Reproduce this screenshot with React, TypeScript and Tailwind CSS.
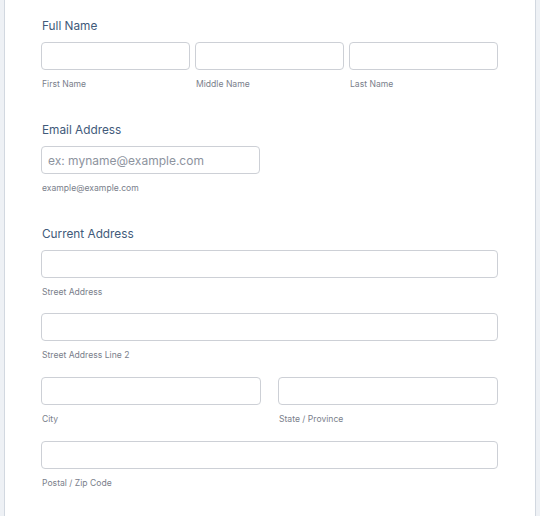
import React from "react";

const font = { fontFamily: "Inter, 'Noto Sans', sans-serif" };

function Field({ label, placeholder, className = "" }: { label?: string; placeholder?: string; className?: string }) {
  return (
    <div className={`flex flex-col ${className}`}>
      <input
        type="text"
        placeholder={placeholder}
        className="h-[28px] w-full rounded-[4px] border border-[#cdd0d6] bg-white px-[6px] text-[12px] text-[#2c3345] outline-none placeholder:text-[#8d939e]"
      />
      {label && <span className="mt-[8px] pl-[1px] text-[8.6px] leading-[12px] text-[#7a808b]">{label}</span>}
    </div>
  );
}

function Heading({ children }: { children: React.ReactNode }) {
  return <h2 className="pl-[1px] text-[11.8px] leading-[16px] font-normal text-[#415a7a]">{children}</h2>;
}

export default function App() {
  return (
    <div className="flex min-h-[516px] w-[540px] bg-[#eef1f5]" style={font}>
      <div className="ml-[4px] w-[532px] border-x border-[#d2d8e0] bg-white pl-[36px] pt-[18px]">
        <div className="w-[457px]">
          <Heading>Full Name</Heading>
          <div className="mt-[8px] grid grid-cols-3 gap-[5px]">
            <Field label="First Name" />
            <Field label="Middle Name" />
            <Field label="Last Name" />
          </div>

          <div className="mt-[32px]">
            <Heading>Email Address</Heading>
            <Field className="mt-[8px] w-[219px]" placeholder="ex: myname@example.com" label="example@example.com" />
          </div>

          <div className="mt-[32px]">
            <Heading>Current Address</Heading>
            <Field className="mt-[8px]" label="Street Address" />
            <Field className="mt-[15px]" label="Street Address Line 2" />
            <div className="mt-[16px] grid grid-cols-2 gap-[17px]">
              <Field label="City" />
              <Field label="State / Province" />
            </div>
            <Field className="mt-[16px]" label="Postal / Zip Code" />
          </div>
        </div>
      </div>
    </div>
  );
}
